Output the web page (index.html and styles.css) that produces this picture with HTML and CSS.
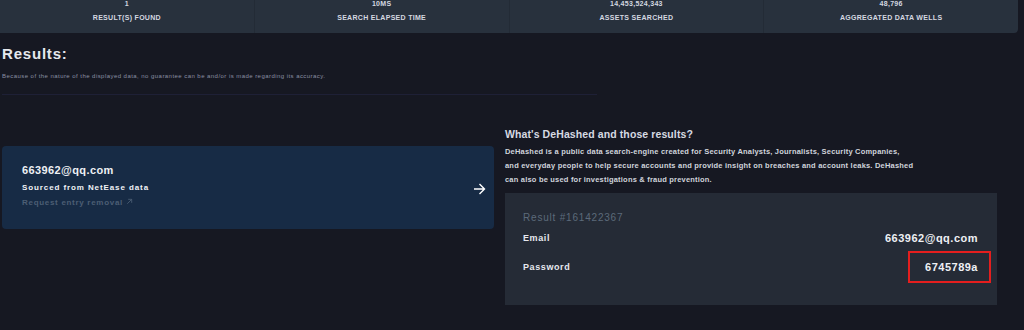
FILE: index.html
```html
<!DOCTYPE html>
<html>
<head>
    <title>DeHashed Results</title>
    <link rel="stylesheet" href="styles.css">
</head>
<body>
    <div class="stats">
        <div class="stat">
            <div class="stat-value">1</div>
            <div class="stat-label">Result(s) found</div>
        </div>
        <div class="stat">
            <div class="stat-value">10ms</div>
            <div class="stat-label">Search elapsed time</div>
        </div>
        <div class="stat">
            <div class="stat-value">14,453,524,343</div>
            <div class="stat-label">Assets searched</div>
        </div>
        <div class="stat">
            <div class="stat-value">48,796</div>
            <div class="stat-label">Aggregated data wells</div>
        </div>
    </div>

    <div class="results">
        <h1>Results:</h1>
        <p class="disclaimer">Because of the nature of the displayed data, no guarantee can be and/or is made regarding its accuracy.</p>
        <div class="divider"></div>

        <div class="columns">
            <div class="left">
                <div class="entry">
                    <div class="entry-text">
                        <div class="entry-email">663962@qq.com</div>
                        <div class="entry-source">Sourced from NetEase data</div>
                        <div class="entry-remove">Request entry removal
                            <svg width="7" height="7" viewBox="0 0 8 8"><path d="M1.5 6.5 L6.5 1.5 M2.5 1.5 H6.5 V5.5" stroke="currentColor" stroke-width="1" fill="none"/></svg>
                        </div>
                    </div>
                    <svg class="entry-arrow" width="13" height="12" viewBox="0 0 13 12"><path d="M1 6 H11.5 M6.5 1 L11.5 6 L6.5 11" stroke="#fff" stroke-width="1.4" fill="none"/></svg>
                </div>
            </div>

            <div class="right">
                <h2>What's DeHashed and those results?</h2>
                <p class="about">DeHashed is a public data search-engine created for Security Analysts, Journalists, Security Companies, and everyday people to help secure accounts and provide insight on breaches and account leaks. DeHashed can also be used for investigations &amp; fraud prevention.</p>
                <div class="detail">
                    <div class="detail-id">Result #161422367</div>
                    <div class="detail-row">
                        <span class="detail-key">Email</span>
                        <span class="detail-val">663962@qq.com</span>
                    </div>
                    <div class="detail-row">
                        <span class="detail-key">Password</span>
                        <span class="detail-val marked">6745789a</span>
                    </div>
                </div>
            </div>
        </div>
    </div>
</body>
</html>
```

FILE: styles.css
```css
body {
    margin: 0;
    background: #161822;
    color: #e6e8ee;
    font-family: 'Liberation Sans', Arial, sans-serif;
    font-weight: bold;
    height: 330px;
    overflow: hidden;
}
.stats {
    display: flex;
    width: 1018px;
    height: 33px;
    background: #28313d;
    border-bottom-right-radius: 4px;
}
.stat {
    flex: 1;
    text-align: center;
    border-right: 1px solid #232b36;
    text-transform: uppercase;
    font-size: 7px;
    letter-spacing: 0.3px;
    color: #d4d8e0;
}
.stat:last-child {
    border-right: none;
}
.stat-value {
    line-height: 8px;
}
.stat-label {
    margin-top: 6px;
}
.results {
    padding-left: 2px;
}
h1 {
    margin: 11px 0 0 0;
    font-size: 15px;
    letter-spacing: 0.8px;
    line-height: 20px;
    color: #e6e8ee;
}
.disclaimer {
    margin: 9px 0 0 0;
    font-size: 6px;
    font-weight: normal;
    letter-spacing: 0.45px;
    color: #8a90a2;
}
.divider {
    width: 595px;
    margin-top: 15px;
    border-top: 1px solid #1e2036;
}
.columns {
    display: flex;
    gap: 11px;
}
.left {
    width: 492px;
    padding-top: 51px;
}
.entry {
    display: flex;
    align-items: center;
    justify-content: space-between;
    background: #172b45;
    border-radius: 4px;
    height: 83px;
    padding: 0 8px 0 20px;
}
.entry-text {
    margin-top: -4px;
}
.entry-email {
    font-size: 11px;
    letter-spacing: 0.4px;
    color: #eef0f4;
}
.entry-source {
    margin-top: 7px;
    font-size: 8px;
    letter-spacing: 0.9px;
    color: #f0f2f6;
}
.entry-remove {
    margin-top: 6px;
    font-size: 8px;
    letter-spacing: 0.7px;
    color: #4c5e74;
}
.entry-arrow {
    margin-top: 3px;
}
.right {
    width: 492px;
    padding-top: 32px;
}
h2 {
    margin: 0;
    font-size: 10.5px;
    letter-spacing: 0.1px;
    line-height: 14px;
    color: #d6dae2;
}
.about {
    margin: 4px 0 0 0;
    width: 410px;
    font-size: 7.5px;
    line-height: 14px;
    letter-spacing: 0.2px;
    color: #d0d4dc;
}
.detail {
    margin-top: 6px;
    background: #252b36;
    height: 112px;
    padding: 0 19px 0 18px;
    box-sizing: border-box;
}
.detail-id {
    padding-top: 19px;
    font-size: 10px;
    font-weight: normal;
    letter-spacing: 0.8px;
    color: #5c6a7a;
}
.detail-row {
    display: flex;
    justify-content: space-between;
    align-items: center;
    height: 29px;
}
.detail-row:first-of-type {
    margin-top: 6px;
}
.detail-key {
    font-size: 9px;
    letter-spacing: 0.6px;
    color: #e6e8ee;
}
.detail-val {
    font-size: 11px;
    letter-spacing: 0.5px;
    color: #eef0f4;
}
.marked {
    position: relative;
}
.marked::after {
    content: "";
    position: absolute;
    left: -17px;
    right: -13px;
    top: -10px;
    bottom: -10px;
    border: 2px solid #e41e1e;
}
```
